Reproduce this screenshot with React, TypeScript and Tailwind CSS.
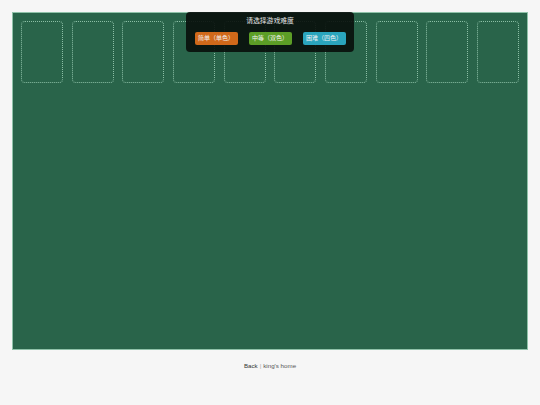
import React from "react";

const levels = [
  { label: "简单（单色）", cls: "bg-[#d0691a]" },
  { label: "中等（双色）", cls: "bg-[#5c9e26]" },
  { label: "困难（四色）", cls: "bg-[#2aa5bd]" },
];

export default function App() {
  return (
    <div className="min-h-[405px] w-[540px] bg-[#f6f6f6] pt-3 font-['Liberation_Sans','Noto_Sans_CJK_SC',sans-serif]">
      <div className="relative mx-3 h-[338px] border border-[#8fc2a9] bg-[#29644a]">
        <div className="flex justify-between px-2 pt-2">
          {Array.from({ length: 10 }).map((_, i) => (
            <div
              key={i}
              className="h-[62px] w-[42px] rounded-[4px] border border-dotted border-[#8cbfa6]"
            />
          ))}
        </div>

        <div className="absolute left-[173px] top-[-1px] flex h-[40px] w-[168px] flex-col items-center rounded-[4px] bg-[rgba(8,14,11,0.9)]">
          <div className="mt-[4px] text-[6.8px] leading-[9px] text-[#e6e6e6]">请选择游戏难度</div>
          <div className="mt-[7px] flex gap-[11px]">
            {levels.map((l) => (
              <button
                key={l.label}
                className={"flex h-[13px] w-[43px] items-center justify-center rounded-[2px] text-[6px] text-[#f2f2f2] " + l.cls}
              >
                {l.label}
              </button>
            ))}
          </div>
        </div>
      </div>

      <div className="mt-[11px] text-center text-[6.2px] leading-[9px]">
        <span className="text-[#333]">Back</span>
        <span className="mx-[2px] text-[#aaa]">|</span>
        <span className="text-[#555]">king's home</span>
      </div>
    </div>
  );
}
